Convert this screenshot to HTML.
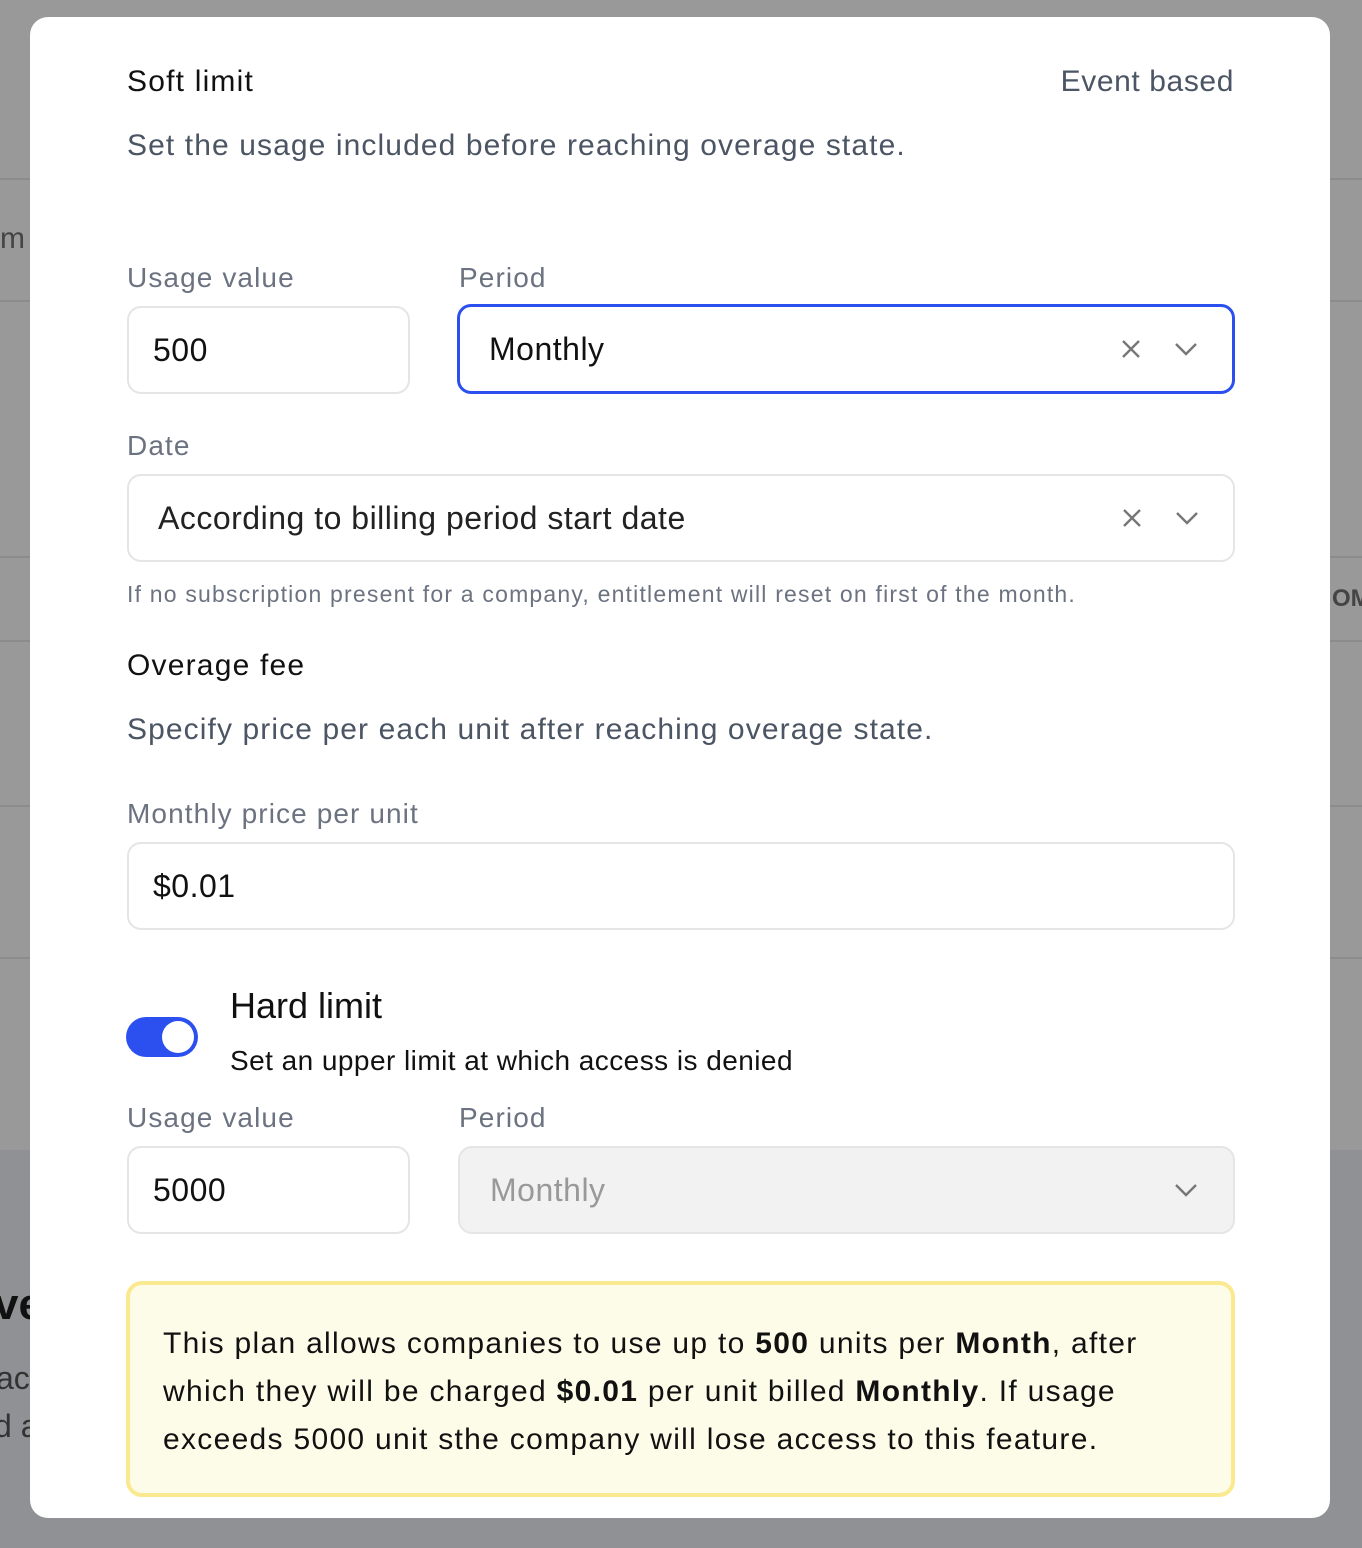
<!DOCTYPE html>
<html><head><meta charset="utf-8"><style>
*{box-sizing:border-box;margin:0;padding:0}
body{width:1362px;height:1548px;background:#999;font-family:"Liberation Sans",sans-serif;position:relative;overflow:hidden}
.ln{position:absolute;left:0;right:0;height:2px;background:#8c8c8c}
.m{position:absolute;left:30px;top:17px;width:1300px;height:1501px;background:#fff;border-radius:18px}
.a{position:absolute;white-space:nowrap}
.t{font-size:30px;color:#111;letter-spacing:1.2px}
.s{font-size:30px;color:#4b5563;letter-spacing:1.1px}
.l{font-size:28px;color:#6b7280;letter-spacing:1.1px}
.f{position:absolute;border:2px solid #e5e5e5;border-radius:14px;height:88px;font-size:32px;color:#111;display:flex;align-items:center;padding-left:24px;letter-spacing:0.5px}
.ic{position:absolute;top:50%;transform:translateY(-50%)}
</style></head><body>
<div class="ln" style="top:178px"></div><div class="ln" style="top:300px"></div>
<div class="ln" style="top:556px"></div><div class="ln" style="top:640px"></div>
<div class="ln" style="top:805px"></div><div class="ln" style="top:957px"></div>
<div style="position:absolute;left:0;right:0;top:1150px;bottom:0;background:#909194"></div>
<div class="a" style="left:0;top:222px;font-size:30px;color:#444">m</div>
<div class="a" style="left:1332px;top:585px;font-size:24px;color:#444;font-weight:bold">OM</div>
<div class="a" style="left:-6px;top:1280px;font-size:44px;color:#111;font-weight:bold">ve</div>
<div class="a" style="left:-4px;top:1360px;font-size:32px;color:#333">ac</div>
<div class="a" style="left:-6px;top:1408px;font-size:32px;color:#333">d a</div>
<div class="m">
<div class="a t" style="left:97px;top:48px">Soft limit</div>
<div class="a s" style="right:96px;top:48px;color:#4b5563;letter-spacing:0.6px">Event based</div>
<div class="a s" style="left:97px;top:112px">Set the usage included before reaching overage state.</div>
<div class="a l" style="left:97px;top:245px">Usage value</div>
<div class="a l" style="left:429px;top:245px">Period</div>
<div class="f" style="left:97px;top:289px;width:283px">500</div>
<div class="f" style="left:427px;top:287px;width:778px;height:90px;border:3px solid #2b50ef;padding-left:29px">Monthly
<svg class="ic" style="left:660px" width="22" height="22" viewBox="0 0 22 22"><path d="M3 3L19 19M19 3L3 19" stroke="#777" stroke-width="2.4"/></svg>
<svg class="ic" style="left:714px" width="24" height="14" viewBox="0 0 24 14"><path d="M2 2L12 12L22 2" stroke="#777" stroke-width="2.4" fill="none"/></svg></div>
<div class="a l" style="left:97px;top:413px">Date</div>
<div class="f" style="left:97px;top:457px;width:1108px;padding-left:29px;color:#222">According to billing period start date
<svg class="ic" style="left:992px" width="22" height="22" viewBox="0 0 22 22"><path d="M3 3L19 19M19 3L3 19" stroke="#777" stroke-width="2.4"/></svg>
<svg class="ic" style="left:1046px" width="24" height="14" viewBox="0 0 24 14"><path d="M2 2L12 12L22 2" stroke="#777" stroke-width="2.4" fill="none"/></svg></div>
<div class="a" style="left:97px;top:564px;font-size:23px;color:#6b7280;letter-spacing:1.2px">If no subscription present for a company, entitlement will reset on first of the month.</div>
<div class="a t" style="left:97px;top:632px">Overage fee</div>
<div class="a s" style="left:97px;top:696px">Specify price per each unit after reaching overage state.</div>
<div class="a l" style="left:97px;top:781px">Monthly price per unit</div>
<div class="f" style="left:97px;top:825px;width:1108px">$0.01</div>
<div style="position:absolute;left:96px;top:1000px;width:72px;height:40px;border-radius:20px;background:#2b50ef"><div style="position:absolute;right:4px;top:4px;width:32px;height:32px;border-radius:50%;background:#fff"></div></div>
<div class="a" style="left:200px;top:968px;font-size:36px;color:#111">Hard limit</div>
<div class="a" style="left:200px;top:1028px;font-size:28px;color:#111;letter-spacing:0.45px">Set an upper limit at which access is denied</div>
<div class="a l" style="left:97px;top:1085px">Usage value</div>
<div class="a l" style="left:429px;top:1085px">Period</div>
<div class="f" style="left:97px;top:1129px;width:283px">5000</div>
<div class="f" style="left:428px;top:1129px;width:777px;background:#f2f2f2;color:#999;padding-left:30px">Monthly
<svg class="ic" style="left:714px" width="24" height="14" viewBox="0 0 24 14"><path d="M2 2L12 12L22 2" stroke="#777" stroke-width="2.4" fill="none"/></svg></div>
<div style="position:absolute;left:96px;top:1264px;width:1109px;height:216px;border:4px solid #fae98f;border-radius:16px;background:#fdfce9;padding:35px 20px 0 33px;font-size:30px;line-height:48px;color:#111;letter-spacing:1.3px;white-space:nowrap">This plan allows companies to use up to <b>500</b> units per <b>Month</b>, after<br>which they will be charged <b>$0.01</b> per unit billed <b>Monthly</b>. If usage<br>exceeds 5000 unit sthe company will lose access to this feature.</div>
</div>
</body></html>
